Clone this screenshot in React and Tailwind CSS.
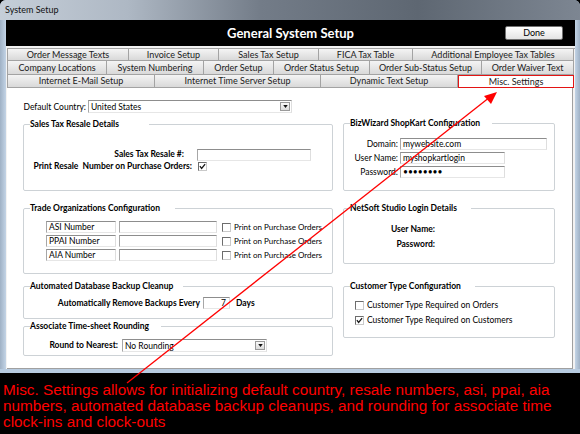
import React from "react";

const tabRows = [
  {
    h: "h-[13px]",
    tabs: [
      { label: "Order Message Texts", w: "w-[121px]" },
      { label: "Invoice Setup", w: "w-[90px]" },
      { label: "Sales Tax Setup", w: "w-[100px]" },
      { label: "FICA Tax Table", w: "w-[94px]" },
      { label: "Additional Employee Tax Tables", w: "w-[161px]" },
    ],
  },
  {
    h: "h-[14px]",
    tabs: [
      { label: "Company Locations", w: "w-[99px]" },
      { label: "System Numbering", w: "w-[97px]" },
      { label: "Order Setup", w: "w-[70px]" },
      { label: "Order Status Setup", w: "w-[96px]" },
      { label: "Order Sub-Status Setup", w: "w-[112px]" },
      { label: "Order Waiver Text", w: "w-[92px]" },
    ],
  },
  {
    h: "h-[13px]",
    tabs: [
      { label: "Internet E-Mail Setup", w: "w-[147px]" },
      { label: "Internet Time Server Setup", w: "w-[166px]" },
      { label: "Dynamic Text Setup", w: "w-[137px]" },
      { label: "Misc. Settings", w: "w-[116px]", active: true },
    ],
  },
];

function Tab({ label, w, active }) {
  if (active) {
    return (
      <div className={`${w} flex items-center justify-center bg-white border border-[#e31414] text-[9px] text-[#1b1b1b]`}>
        {label}
      </div>
    );
  }
  return (
    <div className={`${w} flex items-center justify-center border-r border-b border-[#a3a3a3] bg-gradient-to-b from-[#f4f4f4] to-[#d9d9d9] text-[9px] text-[#1b1b1b]`}>
      {label}
    </div>
  );
}

function Group({ title, gap, className, children }) {
  return (
    <fieldset className={`border border-[#cdd2d6] rounded-[2px] px-[6px] min-w-0 ${className}`}>
      <legend className={`font-bold text-[8.5px] leading-[10px] ${gap}`}>{title}</legend>
      {children}
    </fieldset>
  );
}

function Box({ w, children }) {
  return (
    <div className={`${w} h-[12px] shrink-0 bg-white border border-t-[#8d8d8d] border-l-[#a7a7a7] border-b-[#e6e6e6] border-r-[#dedede] pl-[2px] text-[8.5px] leading-[10px] text-black overflow-hidden whitespace-nowrap`}>
      {children}
    </div>
  );
}

function Check({ on }) {
  return (
    <span className="w-[9px] h-[9px] shrink-0 border border-t-[#6d6d6d] border-l-[#6d6d6d] border-b-[#c9c9c9] border-r-[#c9c9c9] bg-white flex items-center justify-center">
      {on && (
        <svg viewBox="0 0 8 8" className="w-[7px] h-[7px]">
          <path d="M1 3.6 L3 6.2 L7 1.2" stroke="#1a1a1a" strokeWidth="1.5" fill="none" />
        </svg>
      )}
    </span>
  );
}

function Select({ w, value }) {
  return (
    <div className={`${w} h-[13px] shrink-0 bg-white border border-t-[#8d8d8d] border-l-[#a7a7a7] border-b-[#e6e6e6] border-r-[#dedede] flex items-center justify-between pl-[2px] pr-[1px]`}>
      <span className="text-[8.5px] leading-[10px]">{value}</span>
      <span className="w-[10px] h-[9px] border border-[#9a9a9a] bg-gradient-to-b from-[#fafafa] to-[#dcdcdc] flex items-center justify-center">
        <svg viewBox="0 0 6 4" className="w-[5px] h-[3px]">
          <path d="M0 0 L6 0 L3 4 Z" fill="#111" />
        </svg>
      </span>
    </div>
  );
}

function TradeRow({ name }) {
  return (
    <div className="flex items-center h-[12px]">
      <div className="ml-[16px]">
        <Box w="w-[70px]">{name}</Box>
      </div>
      <div className="ml-[3px]">
        <Box w="w-[98px]" />
      </div>
      <div className="ml-[5px] flex items-center gap-[3px]">
        <Check />
        <span className="text-[8px] whitespace-nowrap">Print on Purchase Orders</span>
      </div>
    </div>
  );
}

function BizRow({ label, value }) {
  return (
    <div className="flex items-center h-[12px]">
      <span className="w-[48px] text-right text-[8.5px] leading-[10px] whitespace-nowrap">{label}</span>
      <div className="ml-[2px]">
        <Box w={label === "Domain:" ? "w-[147px]" : "w-[105px]"}>{value}</Box>
      </div>
    </div>
  );
}

export default function App() {
  return (
    <div className="relative w-[580px] h-[434px] overflow-hidden bg-black font-['Lato','Noto_Sans',sans-serif] text-black">
      {/* window */}
      <div className="w-[580px] rounded-t-[6px] overflow-hidden bg-[#a9bdd2]">
        <div className="h-[20px] flex items-center pl-[5px] bg-[linear-gradient(90deg,#c5ced8_0%,#aeb8c4_22%,#737c88_45%,#5e6772_72%,#7d8692_100%)]">
          <span className="text-[9px] text-[#111]">System Setup</span>
        </div>
        <div className="flex">
          <div className="w-[6px] bg-[linear-gradient(90deg,#9fb1c5,#c3d4e6)]" />
          <div className="w-[569px] bg-[#f2f2f2]">
            {/* header */}
            <div className="h-[26px] bg-black grid grid-cols-[1fr_auto_1fr] items-center">
              <div />
              <div className="text-white font-bold text-[13px] leading-none">General System Setup</div>
              <div className="flex justify-end pr-[12px]">
                <div className="w-[58px] h-[14px] flex items-center justify-center border border-[#707070] rounded-[2px] bg-gradient-to-b from-white to-[#e4e4e4] text-[9px] text-black">
                  Done
                </div>
              </div>
            </div>
            {/* tabs */}
            <div className="pt-[2px] pl-[1px]">
              {tabRows.map((row, i) => (
                <div key={i} className={`flex ${row.h} ${i === 0 ? "border-t border-[#a3a3a3]" : ""}`}>
                  {row.tabs.map((t, j) => (
                    <div key={t.label} className={`flex ${j === 0 ? "border-l border-[#a3a3a3]" : ""}`}>
                      <Tab {...t} />
                    </div>
                  ))}
                </div>
              ))}
            </div>
            {/* panel */}
            <div className="ml-[1px] w-[566px] h-[281px] bg-white border-b border-r border-[#a0a0a0] flex pl-[16px]">
              {/* left column */}
              <div className="w-[310px] pt-[12px]">
                <div className="flex items-center h-[13px] -ml-[1px]">
                  <span className="w-[64px] text-right text-[8.5px] leading-[10px] whitespace-nowrap">Default Country:</span>
                  <div className="ml-[2px]">
                    <Select w="w-[204px]" value="United States" />
                  </div>
                </div>

                <Group title="Sales Tax Resale Details" gap="pr-[30px]" className="mt-[6px] h-[72px]">
                  <div className="pt-[20px] flex items-center h-[31px]">
                    <span className="w-[154px] text-right text-[8.5px] font-bold">Sales Tax Resale #:</span>
                    <div className="ml-[13px]">
                      <Box w="w-[114px]" />
                    </div>
                  </div>
                  <div className="flex items-center h-[12px]">
                    <span className="w-[162px] text-right text-[8.5px] font-bold whitespace-nowrap">Print Resale&nbsp; Number on Purchase Orders:</span>
                    <div className="ml-[6px]">
                      <Check on />
                    </div>
                  </div>
                </Group>

                <Group title="Trade Organizations Configuration" gap="pr-[15px]" className="mt-[12px] h-[71px]">
                  <div className="pt-[8px] flex flex-col gap-[2px]">
                    <TradeRow name="ASI Number" />
                    <TradeRow name="PPAI Number" />
                    <TradeRow name="AIA Number" />
                  </div>
                </Group>

                <Group title="Automated Database Backup Cleanup" gap="pr-[10px]" className="mt-[7px] h-[38px]">
                  <div className="pt-[6px] flex items-center">
                    <span className="w-[170px] text-right text-[8.5px] font-bold whitespace-nowrap">Automatically Remove Backups Every</span>
                    <div className="ml-[3px] w-[27px] h-[12px] bg-white border border-t-[#8d8d8d] border-l-[#a7a7a7] border-b-[#e6e6e6] border-r-[#dedede] text-right pr-[3px] text-[8.5px] leading-[10px]">
                      7
                    </div>
                    <span className="ml-[6px] text-[8.5px] font-bold">Days</span>
                  </div>
                </Group>

                <Group title="Associate Time-sheet Rounding" gap="pr-[12px]" className="mt-[2px] h-[35px]">
                  <div className="pt-[8px] flex items-center">
                    <span className="w-[88px] text-right text-[8.5px] font-bold whitespace-nowrap">Round to Nearest:</span>
                    <div className="ml-[4px]">
                      <Select w="w-[145px]" value="No Rounding" />
                    </div>
                  </div>
                </Group>
              </div>

              {/* right column */}
              <div className="w-[212px] ml-[10px] pt-[30px]">
                <Group title="BizWizard ShopKart Configuration" gap="pr-[12px]" className="h-[73px]">
                  <div className="pt-[10px] flex flex-col gap-[2px]">
                    <BizRow label="Domain:" value="mywebsite.com" />
                    <BizRow label="User Name:" value="myshopkartlogin" />
                    <BizRow label="Password:" value="••••••••" />
                  </div>
                </Group>

                <Group title="NetSoft Studio Login Details" gap="pr-[14px]" className="mt-[12px] h-[61px]">
                  <div className="pt-[10px] flex flex-col gap-[3px]">
                    <div className="h-[12px] flex items-center">
                      <span className="w-[85px] text-right text-[8.5px] font-bold">User Name:</span>
                    </div>
                    <div className="h-[12px] flex items-center">
                      <span className="w-[85px] text-right text-[8.5px] font-bold">Password:</span>
                    </div>
                  </div>
                </Group>

                <Group title="Customer Type Configuration" gap="pr-[14px]" className="mt-[17px] h-[57px]">
                  <div className="pt-[8px] pl-[5px] flex flex-col gap-[3px]">
                    <div className="h-[12px] flex items-center gap-[3px]">
                      <Check />
                      <span className="text-[8.5px]">Customer Type Required on Orders</span>
                    </div>
                    <div className="h-[12px] flex items-center gap-[3px]">
                      <Check on />
                      <span className="text-[8.5px]">Customer Type Required on Customers</span>
                    </div>
                  </div>
                </Group>
              </div>
            </div>
          </div>
          <div className="w-[5px] bg-[linear-gradient(90deg,#c3d4e6,#9fb1c5)]" />
        </div>
        <div className="h-[4px] bg-[#b7cbe0]" />
      </div>

      {/* caption */}
      <div className="mt-[9px] pl-[3px] text-[15.3px] leading-[16px] text-[#ff0000] font-['Liberation_Sans',Arial,sans-serif] whitespace-nowrap">
        Misc. Settings allows for initializing default country, resale numbers, asi, ppai, aia
        <br />
        numbers, automated database backup cleanups, and rounding for associate time
        <br />
        clock-ins and clock-outs
      </div>

      {/* annotation arrow */}
      <svg className="absolute inset-0 pointer-events-none" width="580" height="434" viewBox="0 0 580 434">
        <line x1="127" y1="383" x2="490" y2="97" stroke="#ff0000" strokeWidth="1.3" />
        <path d="M497 92 L484 96 L491 104 Z" fill="#ff0000" />
      </svg>
    </div>
  );
}
